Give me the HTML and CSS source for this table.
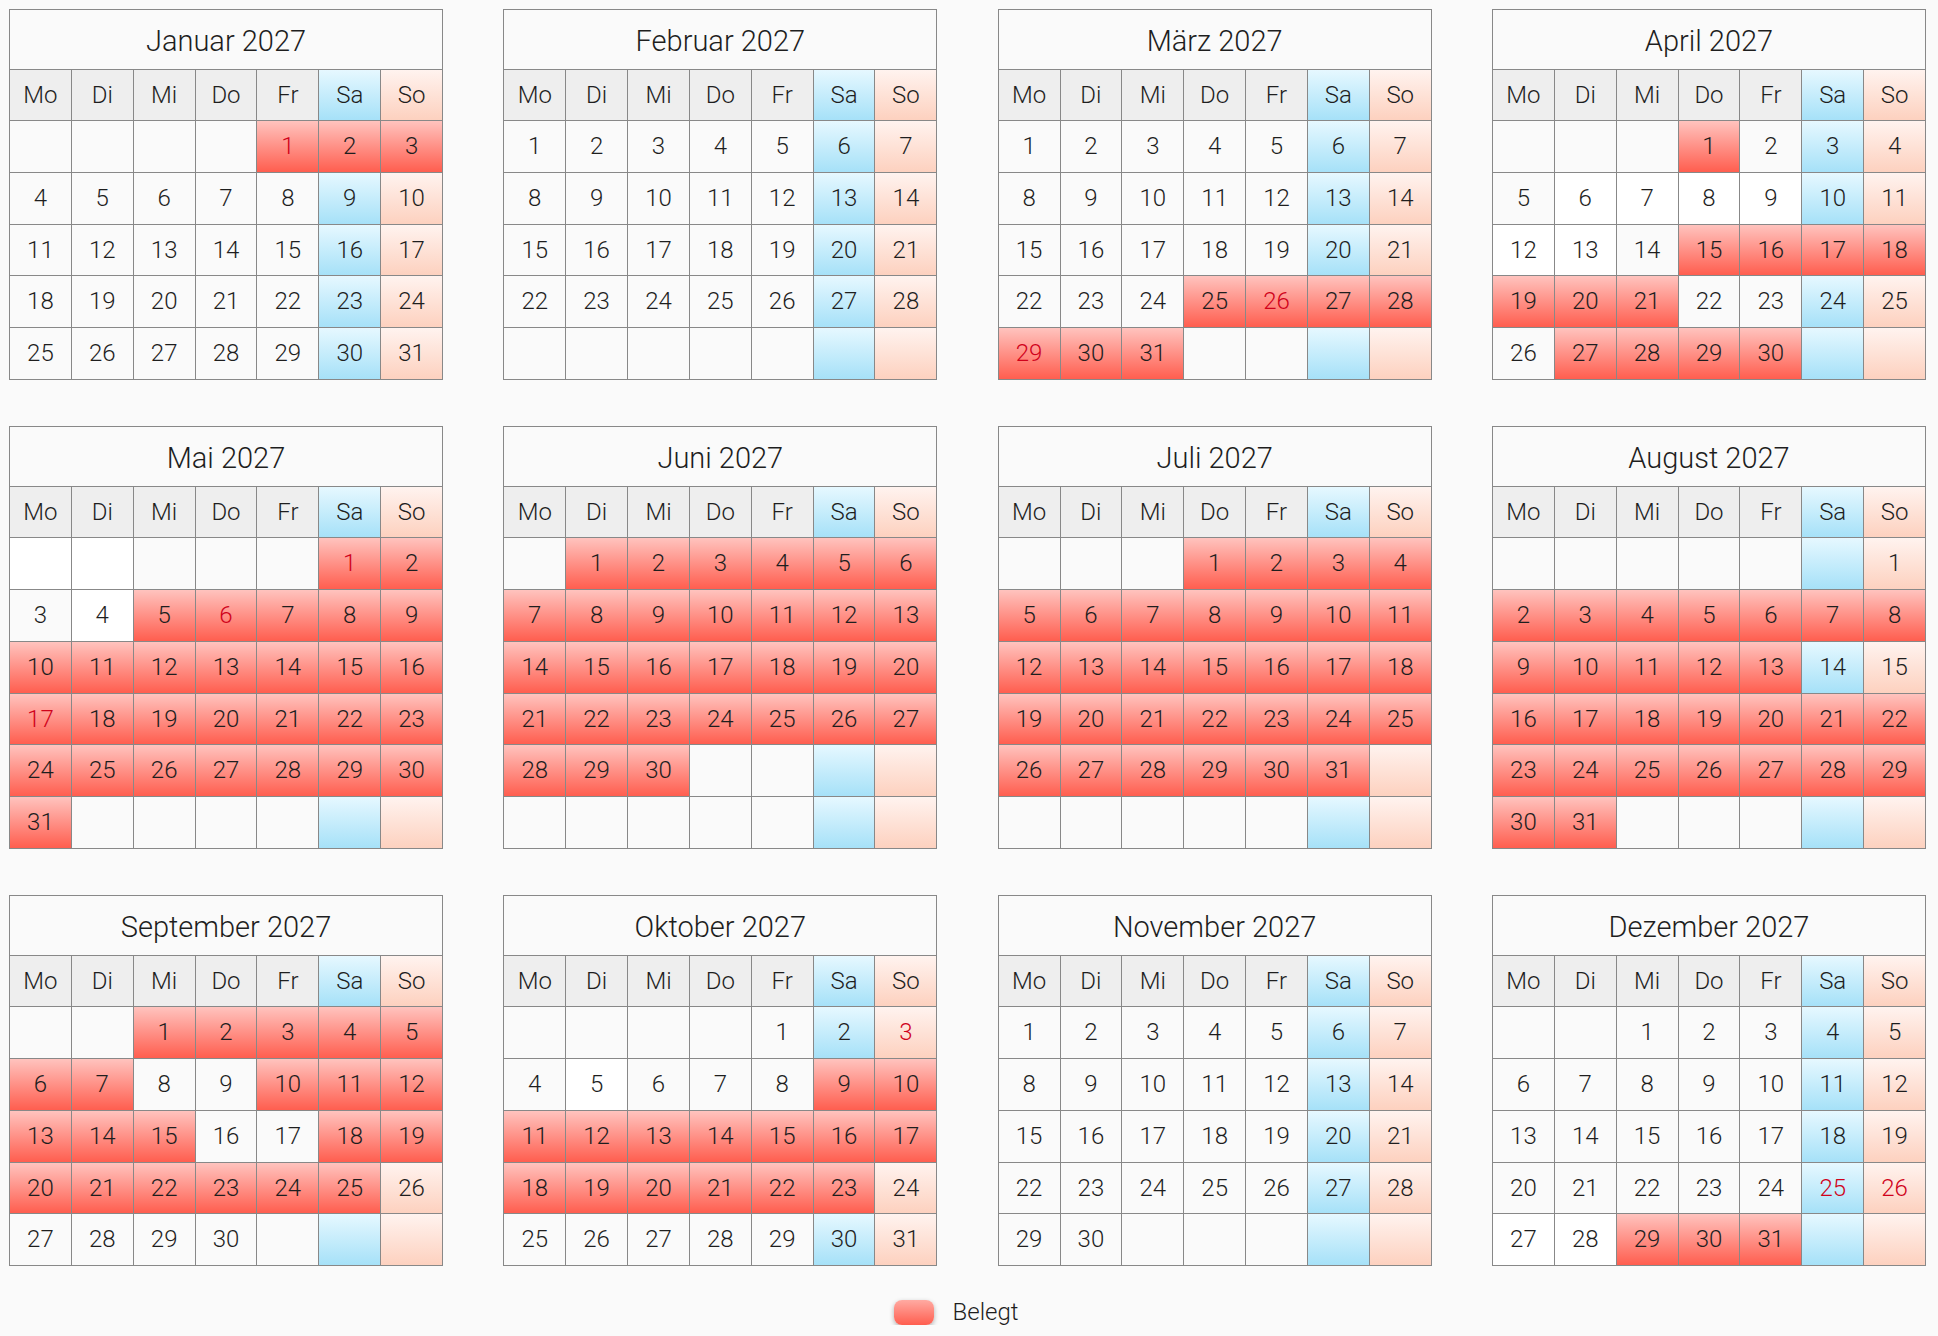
FILE: index.html
```html
<!DOCTYPE html>
<html lang="de">
<head>
<meta charset="utf-8">
<title>Belegungskalender 2027</title>
<link rel="stylesheet" href="styles.css">
</head>
<body>
<main class="year">

<div class="cal">
<span class="t">Januar 2027</span>
<span class="wd">Mo</span><span class="wd">Di</span><span class="wd">Mi</span><span class="wd">Do</span><span class="wd">Fr</span><span class="wd">Sa</span><span class="wd">So</span>
<span></span><span></span><span></span><span></span><span class="b h">1</span><span class="b">2</span><span class="b">3</span>
<span>4</span><span>5</span><span>6</span><span>7</span><span>8</span><span>9</span><span>10</span>
<span>11</span><span>12</span><span>13</span><span>14</span><span>15</span><span>16</span><span>17</span>
<span>18</span><span>19</span><span>20</span><span>21</span><span>22</span><span>23</span><span>24</span>
<span>25</span><span>26</span><span>27</span><span>28</span><span>29</span><span>30</span><span>31</span>
</div>

<div class="cal">
<span class="t">Februar 2027</span>
<span class="wd">Mo</span><span class="wd">Di</span><span class="wd">Mi</span><span class="wd">Do</span><span class="wd">Fr</span><span class="wd">Sa</span><span class="wd">So</span>
<span>1</span><span>2</span><span>3</span><span>4</span><span>5</span><span>6</span><span>7</span>
<span>8</span><span>9</span><span>10</span><span>11</span><span>12</span><span>13</span><span>14</span>
<span>15</span><span>16</span><span>17</span><span>18</span><span>19</span><span>20</span><span>21</span>
<span>22</span><span>23</span><span>24</span><span>25</span><span>26</span><span>27</span><span>28</span>
<span></span><span></span><span></span><span></span><span></span><span></span><span></span>
</div>

<div class="cal">
<span class="t">März 2027</span>
<span class="wd">Mo</span><span class="wd">Di</span><span class="wd">Mi</span><span class="wd">Do</span><span class="wd">Fr</span><span class="wd">Sa</span><span class="wd">So</span>
<span>1</span><span>2</span><span>3</span><span>4</span><span>5</span><span>6</span><span>7</span>
<span>8</span><span>9</span><span>10</span><span>11</span><span>12</span><span>13</span><span>14</span>
<span>15</span><span>16</span><span>17</span><span>18</span><span>19</span><span>20</span><span>21</span>
<span>22</span><span>23</span><span>24</span><span class="b">25</span><span class="b h">26</span><span class="b">27</span><span class="b">28</span>
<span class="b h">29</span><span class="b">30</span><span class="b">31</span><span></span><span></span><span></span><span></span>
</div>

<div class="cal">
<span class="t">April 2027</span>
<span class="wd">Mo</span><span class="wd">Di</span><span class="wd">Mi</span><span class="wd">Do</span><span class="wd">Fr</span><span class="wd">Sa</span><span class="wd">So</span>
<span></span><span></span><span></span><span class="b">1</span><span>2</span><span>3</span><span>4</span>
<span>5</span><span class="w">6</span><span class="w">7</span><span class="w">8</span><span class="w">9</span><span>10</span><span>11</span>
<span class="w">12</span><span class="w">13</span><span>14</span><span class="b">15</span><span class="b">16</span><span class="b">17</span><span class="b">18</span>
<span class="b">19</span><span class="b">20</span><span class="b">21</span><span>22</span><span>23</span><span>24</span><span>25</span>
<span>26</span><span class="b">27</span><span class="b">28</span><span class="b">29</span><span class="b">30</span><span></span><span></span>
</div>

<div class="cal">
<span class="t">Mai 2027</span>
<span class="wd">Mo</span><span class="wd">Di</span><span class="wd">Mi</span><span class="wd">Do</span><span class="wd">Fr</span><span class="wd">Sa</span><span class="wd">So</span>
<span class="w"></span><span class="w"></span><span></span><span></span><span></span><span class="b h">1</span><span class="b">2</span>
<span>3</span><span class="w">4</span><span class="b">5</span><span class="b h">6</span><span class="b">7</span><span class="b">8</span><span class="b">9</span>
<span class="b">10</span><span class="b">11</span><span class="b">12</span><span class="b">13</span><span class="b">14</span><span class="b">15</span><span class="b">16</span>
<span class="b h">17</span><span class="b">18</span><span class="b">19</span><span class="b">20</span><span class="b">21</span><span class="b">22</span><span class="b">23</span>
<span class="b">24</span><span class="b">25</span><span class="b">26</span><span class="b">27</span><span class="b">28</span><span class="b">29</span><span class="b">30</span>
<span class="b">31</span><span></span><span></span><span></span><span></span><span></span><span></span>
</div>

<div class="cal">
<span class="t">Juni 2027</span>
<span class="wd">Mo</span><span class="wd">Di</span><span class="wd">Mi</span><span class="wd">Do</span><span class="wd">Fr</span><span class="wd">Sa</span><span class="wd">So</span>
<span></span><span class="b">1</span><span class="b">2</span><span class="b">3</span><span class="b">4</span><span class="b">5</span><span class="b">6</span>
<span class="b">7</span><span class="b">8</span><span class="b">9</span><span class="b">10</span><span class="b">11</span><span class="b">12</span><span class="b">13</span>
<span class="b">14</span><span class="b">15</span><span class="b">16</span><span class="b">17</span><span class="b">18</span><span class="b">19</span><span class="b">20</span>
<span class="b">21</span><span class="b">22</span><span class="b">23</span><span class="b">24</span><span class="b">25</span><span class="b">26</span><span class="b">27</span>
<span class="b">28</span><span class="b">29</span><span class="b">30</span><span></span><span></span><span></span><span></span>
<span></span><span></span><span></span><span></span><span></span><span></span><span></span>
</div>

<div class="cal">
<span class="t">Juli 2027</span>
<span class="wd">Mo</span><span class="wd">Di</span><span class="wd">Mi</span><span class="wd">Do</span><span class="wd">Fr</span><span class="wd">Sa</span><span class="wd">So</span>
<span></span><span></span><span></span><span class="b">1</span><span class="b">2</span><span class="b">3</span><span class="b">4</span>
<span class="b">5</span><span class="b">6</span><span class="b">7</span><span class="b">8</span><span class="b">9</span><span class="b">10</span><span class="b">11</span>
<span class="b">12</span><span class="b">13</span><span class="b">14</span><span class="b">15</span><span class="b">16</span><span class="b">17</span><span class="b">18</span>
<span class="b">19</span><span class="b">20</span><span class="b">21</span><span class="b">22</span><span class="b">23</span><span class="b">24</span><span class="b">25</span>
<span class="b">26</span><span class="b">27</span><span class="b">28</span><span class="b">29</span><span class="b">30</span><span class="b">31</span><span></span>
<span></span><span></span><span></span><span></span><span></span><span></span><span></span>
</div>

<div class="cal">
<span class="t">August 2027</span>
<span class="wd">Mo</span><span class="wd">Di</span><span class="wd">Mi</span><span class="wd">Do</span><span class="wd">Fr</span><span class="wd">Sa</span><span class="wd">So</span>
<span></span><span></span><span></span><span></span><span></span><span></span><span>1</span>
<span class="b">2</span><span class="b">3</span><span class="b">4</span><span class="b">5</span><span class="b">6</span><span class="b">7</span><span class="b">8</span>
<span class="b">9</span><span class="b">10</span><span class="b">11</span><span class="b">12</span><span class="b">13</span><span>14</span><span>15</span>
<span class="b">16</span><span class="b">17</span><span class="b">18</span><span class="b">19</span><span class="b">20</span><span class="b">21</span><span class="b">22</span>
<span class="b">23</span><span class="b">24</span><span class="b">25</span><span class="b">26</span><span class="b">27</span><span class="b">28</span><span class="b">29</span>
<span class="b">30</span><span class="b">31</span><span></span><span></span><span></span><span></span><span></span>
</div>

<div class="cal">
<span class="t">September 2027</span>
<span class="wd">Mo</span><span class="wd">Di</span><span class="wd">Mi</span><span class="wd">Do</span><span class="wd">Fr</span><span class="wd">Sa</span><span class="wd">So</span>
<span></span><span></span><span class="b">1</span><span class="b">2</span><span class="b">3</span><span class="b">4</span><span class="b">5</span>
<span class="b">6</span><span class="b">7</span><span>8</span><span>9</span><span class="b">10</span><span class="b">11</span><span class="b">12</span>
<span class="b">13</span><span class="b">14</span><span class="b">15</span><span>16</span><span>17</span><span class="b">18</span><span class="b">19</span>
<span class="b">20</span><span class="b">21</span><span class="b">22</span><span class="b">23</span><span class="b">24</span><span class="b">25</span><span>26</span>
<span>27</span><span>28</span><span>29</span><span>30</span><span></span><span></span><span></span>
</div>

<div class="cal">
<span class="t">Oktober 2027</span>
<span class="wd">Mo</span><span class="wd">Di</span><span class="wd">Mi</span><span class="wd">Do</span><span class="wd">Fr</span><span class="wd">Sa</span><span class="wd">So</span>
<span></span><span></span><span></span><span></span><span>1</span><span>2</span><span class="h">3</span>
<span>4</span><span class="w">5</span><span>6</span><span>7</span><span>8</span><span class="b">9</span><span class="b">10</span>
<span class="b">11</span><span class="b">12</span><span class="b">13</span><span class="b">14</span><span class="b">15</span><span class="b">16</span><span class="b">17</span>
<span class="b">18</span><span class="b">19</span><span class="b">20</span><span class="b">21</span><span class="b">22</span><span class="b">23</span><span>24</span>
<span>25</span><span>26</span><span>27</span><span>28</span><span>29</span><span>30</span><span>31</span>
</div>

<div class="cal">
<span class="t">November 2027</span>
<span class="wd">Mo</span><span class="wd">Di</span><span class="wd">Mi</span><span class="wd">Do</span><span class="wd">Fr</span><span class="wd">Sa</span><span class="wd">So</span>
<span>1</span><span>2</span><span>3</span><span>4</span><span>5</span><span>6</span><span>7</span>
<span>8</span><span>9</span><span>10</span><span>11</span><span>12</span><span>13</span><span>14</span>
<span>15</span><span>16</span><span>17</span><span>18</span><span>19</span><span>20</span><span>21</span>
<span>22</span><span>23</span><span>24</span><span>25</span><span>26</span><span>27</span><span>28</span>
<span>29</span><span>30</span><span></span><span></span><span></span><span></span><span></span>
</div>

<div class="cal">
<span class="t">Dezember 2027</span>
<span class="wd">Mo</span><span class="wd">Di</span><span class="wd">Mi</span><span class="wd">Do</span><span class="wd">Fr</span><span class="wd">Sa</span><span class="wd">So</span>
<span></span><span></span><span>1</span><span>2</span><span>3</span><span>4</span><span>5</span>
<span>6</span><span>7</span><span>8</span><span>9</span><span>10</span><span>11</span><span>12</span>
<span>13</span><span>14</span><span>15</span><span>16</span><span>17</span><span>18</span><span>19</span>
<span>20</span><span>21</span><span>22</span><span>23</span><span>24</span><span class="h">25</span><span class="h">26</span>
<span class="w">27</span><span class="w">28</span><span class="b">29</span><span class="b">30</span><span class="b">31</span><span></span><span></span>
</div>

</main>
<div class="legend">
<span class="swatch"></span><span class="label">Belegt</span>
</div>
</body>
</html>
```
FILE: styles.css
```css
html, body {
  margin: 0;
  background: #fafafa;
}
body {
  padding: 9px 0 0 9px;
  font-family: "Roboto", "Helvetica Neue", "Liberation Sans", sans-serif;
  font-weight: 300;
  color: #1e1e1e;
}
.year {
  display: grid;
  grid-template-columns: repeat(4, 434px);
  column-gap: 60.33px;
  row-gap: 46.5px;
  align-items: start;
}
.cal {
  width: 434px;
  box-sizing: border-box;
  display: grid;
  grid-template-columns: repeat(7, 1fr);
  border-top: 1px solid #888;
  border-left: 1px solid #888;
}
.cal > span {
  height: 50.75px;
  line-height: 50.75px;
  text-align: center;
  font-size: 24px;
  background: #fafafa;
  border-right: 1px solid #888;
  border-bottom: 1px solid #888;
}
.cal > .t {
  grid-column: 1 / -1;
  height: 55px;
  line-height: 55px;
  padding-top: 4px;
  font-size: 29px;
}
.cal > .wd {
  height: 50px;
  line-height: 50px;
  background: #eeeeee;
}
.cal > :nth-child(7n) {
  background: linear-gradient(#e6f8ff, #a6e1f8);
}
.cal > :nth-child(7n+8) {
  background: linear-gradient(#fff3ef, #fdd1bf);
}
.cal > .w {
  background: #ffffff;
}
.cal > .b {
  background: linear-gradient(#ffc3be, #ff5e4f);
}
.cal > .h {
  color: #d0021b;
}
.legend {
  display: flex;
  justify-content: center;
  align-items: center;
  gap: 19px;
  margin-top: 34px;
  padding-right: 35px;
}
.swatch {
  width: 40px;
  height: 25px;
  border-radius: 8px;
  background: linear-gradient(#ffaaa2, #ff5e4f);
  box-shadow: 0 2px 5px rgba(0, 0, 0, 0.3);
}
.label {
  font-size: 24px;
  line-height: 25px;
}
```
